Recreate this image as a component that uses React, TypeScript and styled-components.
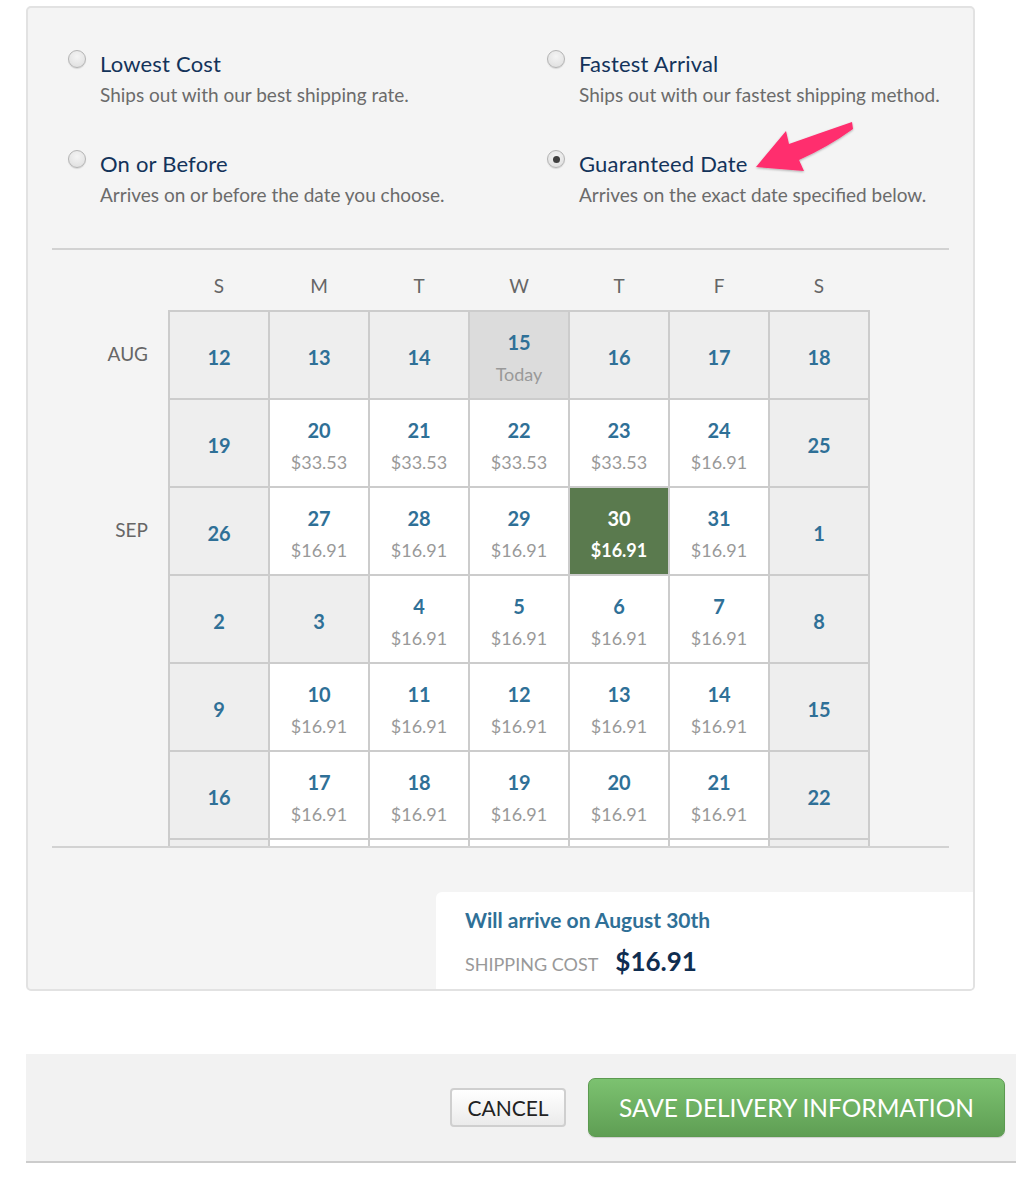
import React from "react";
import styled, { createGlobalStyle } from "styled-components";

const GlobalStyle = createGlobalStyle`
  html, body { margin: 0; padding: 0; background: #ffffff; }
  body { font-family: Lato, "Open Sans", "Liberation Sans", sans-serif; -webkit-font-smoothing: antialiased; }
  * { box-sizing: border-box; }
`;

const Page = styled.div`
  padding: 6px 0 21px 26px;
`;

const Card = styled.div`
  position: relative;
  width: 949px;
  border: 2px solid #e2e2e2;
  border-radius: 5px;
  background: #f4f4f4;
  overflow: hidden;
`;

const CardInner = styled.div`
  padding: 0 24px;
`;

const Options = styled.div`
  display: grid;
  grid-template-columns: 479px 1fr;
  row-gap: 44px;
  padding: 43px 16px 0;
`;

const Option = styled.label`
  display: grid;
  grid-template-columns: 18px 1fr;
  column-gap: 14px;
  cursor: pointer;
`;

const Radio = styled.span<{ $checked?: boolean }>`
  width: 18px;
  height: 18px;
  margin-top: -1px;
  border-radius: 50%;
  border: 1px solid #b4b4b4;
  background: radial-gradient(circle at 50% 35%, #f4f4f4 0%, #dcdcdc 100%);
  box-shadow: 0 1px 1px rgba(0, 0, 0, 0.12);
  display: flex;
  align-items: center;
  justify-content: center;
  &::after {
    content: "";
    width: 7px;
    height: 7px;
    border-radius: 50%;
    background: #404040;
    display: ${(p) => (p.$checked ? "block" : "none")};
  }
`;

const OptionText = styled.div`
  display: flex;
  flex-direction: column;
  white-space: nowrap;
`;

const OptionTitle = styled.div`
  font-size: 22px;
  line-height: 26px;
  letter-spacing: 0.2px;
  color: #13335a;
`;

const OptionDesc = styled.div`
  margin-top: 6px;
  font-size: 19px;
  line-height: 24px;
  color: #6b6b6b;
`;

const Divider = styled.div`
  margin-top: 41px;
  height: 2px;
  background: #d2d2d2;
`;

const CalendarScroll = styled.div`
  height: 598px;
  overflow: hidden;
  border-bottom: 2px solid #d2d2d2;
  display: flex;
  align-items: flex-start;
`;

const Months = styled.div`
  flex-shrink: 0;
  width: 116px;
  padding-top: 62px;
  display: grid;
  grid-auto-rows: 86px;
  row-gap: 2px;
  align-content: start;
`;

const MonthLabel = styled.div`
  padding-right: 20px;
  padding-bottom: 4px;
  font-size: 19px;
  color: #666;
  display: flex;
  align-items: center;
  justify-content: flex-end;
`;

const CalendarBody = styled.div`
  flex-shrink: 0;
  display: flex;
  flex-direction: column;
`;

const DayHeaders = styled.div`
  flex-shrink: 0;
  height: 60px;
  padding: 10px 2px 0;
  display: grid;
  grid-template-columns: repeat(7, 98px);
  column-gap: 2px;
  align-items: center;
`;

const DayHeader = styled.div`
  text-align: center;
  font-size: 19px;
  color: #666;
`;

const WeekGrid = styled.div`
  flex-shrink: 0;
  display: grid;
  grid-template-columns: repeat(7, 98px);
  grid-auto-rows: 86px;
  gap: 2px;
  padding: 2px;
  background: #cccccc;
`;

type CellKind = "off" | "today" | "open" | "selected";

const cellBg: Record<CellKind, string> = {
  off: "#eeeeee",
  today: "#dcdcdc",
  open: "#ffffff",
  selected: "#5a7a4e",
};

const Cell = styled.div<{ $kind: CellKind }>`
  background: ${(p) => cellBg[p.$kind]};
  display: flex;
  flex-direction: column;
  align-items: center;
  justify-content: center;
  padding-top: 4px;
  cursor: ${(p) => (p.$kind === "open" ? "pointer" : "default")};
`;

const DayNum = styled.div<{ $selected?: boolean }>`
  font-size: 20px;
  line-height: 24px;
  font-weight: 700;
  color: ${(p) => (p.$selected ? "#ffffff" : "#2f7097")};
`;

const Sub = styled.div<{ $selected?: boolean }>`
  margin-top: 9px;
  font-size: 18px;
  line-height: 22px;
  font-weight: ${(p) => (p.$selected ? 700 : 400)};
  color: ${(p) => (p.$selected ? "#ffffff" : "#999999")};
`;

const SummaryRow = styled.div`
  margin-top: 44px;
  display: flex;
  justify-content: flex-end;
`;

const Summary = styled.div`
  width: 537px;
  background: #ffffff;
  border-top-left-radius: 6px;
  padding: 16px 29px 13px;
`;

const SummaryTitle = styled.div`
  font-size: 21px;
  line-height: 24px;
  font-weight: 700;
  color: #2f7097;
`;

const CostRow = styled.div`
  margin-top: 14px;
  display: flex;
  align-items: baseline;
  gap: 17px;
`;

const CostLabel = styled.span`
  font-size: 18px;
  color: #999999;
  text-transform: uppercase;
`;

const CostValue = styled.span`
  font-size: 26px;
  line-height: 30px;
  font-weight: 700;
  color: #0f2d50;
`;

const Arrow = styled.svg`
  position: absolute;
  left: 712px;
  top: 107px;
  width: 120px;
  height: 70px;
  overflow: visible;
`;

const Footer = styled.div`
  margin-top: 63px;
  height: 109px;
  background: #f2f2f2;
  border-bottom: 2px solid #cccccc;
  display: flex;
  align-items: center;
  justify-content: flex-end;
  gap: 22px;
  padding-right: 11px;
`;

const CancelButton = styled.button`
  width: 116px;
  height: 39px;
  border: 2px solid #cfcfcf;
  border-radius: 4px;
  background: linear-gradient(#ffffff, #ebebeb);
  font-family: Lato, "Liberation Sans", sans-serif;
  font-size: 21px;
  color: #222222;
  padding: 0;
  cursor: pointer;
`;

const SaveButton = styled.button`
  width: 417px;
  height: 59px;
  border: 1px solid #5c9a50;
  border-radius: 7px;
  background: linear-gradient(#7cc270, #5f9e54);
  box-shadow: 0 1px 1px rgba(0, 0, 0, 0.15);
  font-family: Lato, "Liberation Sans", sans-serif;
  font-size: 24.5px;
  color: #ffffff;
  padding: 0;
  cursor: pointer;
`;

type Day = { d: number; kind: CellKind; sub?: string };

const off = (d: number): Day => ({ d, kind: "off" });
const open = (d: number, sub = "$16.91"): Day => ({ d, kind: "open", sub });

const weeks: Day[][] = [
  [off(12), off(13), off(14), { d: 15, kind: "today", sub: "Today" }, off(16), off(17), off(18)],
  [off(19), open(20, "$33.53"), open(21, "$33.53"), open(22, "$33.53"), open(23, "$33.53"), open(24), off(25)],
  [off(26), open(27), open(28), open(29), { d: 30, kind: "selected", sub: "$16.91" }, open(31), off(1)],
  [off(2), off(3), open(4), open(5), open(6), open(7), off(8)],
  [off(9), open(10), open(11), open(12), open(13), open(14), off(15)],
  [off(16), open(17), open(18), open(19), open(20), open(21), off(22)],
  [off(23), open(24), open(25), open(26), open(27), open(28), off(29)],
];

const monthLabels = ["AUG", "", "SEP", "", "", "", ""];

const options = [
  { title: "Lowest Cost", desc: "Ships out with our best shipping rate.", checked: false },
  { title: "Fastest Arrival", desc: "Ships out with our fastest shipping method.", checked: false },
  { title: "On or Before", desc: "Arrives on or before the date you choose.", checked: false },
  { title: "Guaranteed Date", desc: "Arrives on the exact date specified below.", checked: true },
];

export default function App() {
  return (
    <>
      <GlobalStyle />
      <Page>
        <Card>
          <CardInner>
            <Options>
              {options.map((o) => (
                <Option key={o.title}>
                  <Radio $checked={o.checked} />
                  <OptionText>
                    <OptionTitle>{o.title}</OptionTitle>
                    <OptionDesc>{o.desc}</OptionDesc>
                  </OptionText>
                </Option>
              ))}
            </Options>
            <Divider />
            <CalendarScroll>
              <Months>
                {monthLabels.map((m, i) => (
                  <MonthLabel key={i}>{m}</MonthLabel>
                ))}
              </Months>
              <CalendarBody>
                <DayHeaders>
                  {["S", "M", "T", "W", "T", "F", "S"].map((d, i) => (
                    <DayHeader key={i}>{d}</DayHeader>
                  ))}
                </DayHeaders>
                <WeekGrid>
                  {weeks.flat().map((day, i) => (
                    <Cell key={i} $kind={day.kind}>
                      <DayNum $selected={day.kind === "selected"}>{day.d}</DayNum>
                      {day.sub && <Sub $selected={day.kind === "selected"}>{day.sub}</Sub>}
                    </Cell>
                  ))}
                </WeekGrid>
              </CalendarBody>
            </CalendarScroll>
          </CardInner>
          <SummaryRow>
            <Summary>
              <SummaryTitle>Will arrive on August 30th</SummaryTitle>
              <CostRow>
                <CostLabel>Shipping Cost</CostLabel>
                <CostValue>$16.91</CostValue>
              </CostRow>
            </Summary>
          </SummaryRow>
          <Arrow viewBox="0 0 120 70">
            <defs>
              <filter id="arrowShadow" x="-20%" y="-20%" width="140%" height="140%">
                <feDropShadow dx="0" dy="1" stdDeviation="0.8" floodColor="#000" floodOpacity="0.3" />
              </filter>
            </defs>
            <path
              d="M16,52 L46,16 L49,29 Q80,18 112,7 L113,14 Q88,32 59,45 L64,56 Z"
              fill="#ff2d6e"
              filter="url(#arrowShadow)"
            />
          </Arrow>
        </Card>
        <Footer>
          <CancelButton>CANCEL</CancelButton>
          <SaveButton>SAVE DELIVERY INFORMATION</SaveButton>
        </Footer>
      </Page>
    </>
  );
}
